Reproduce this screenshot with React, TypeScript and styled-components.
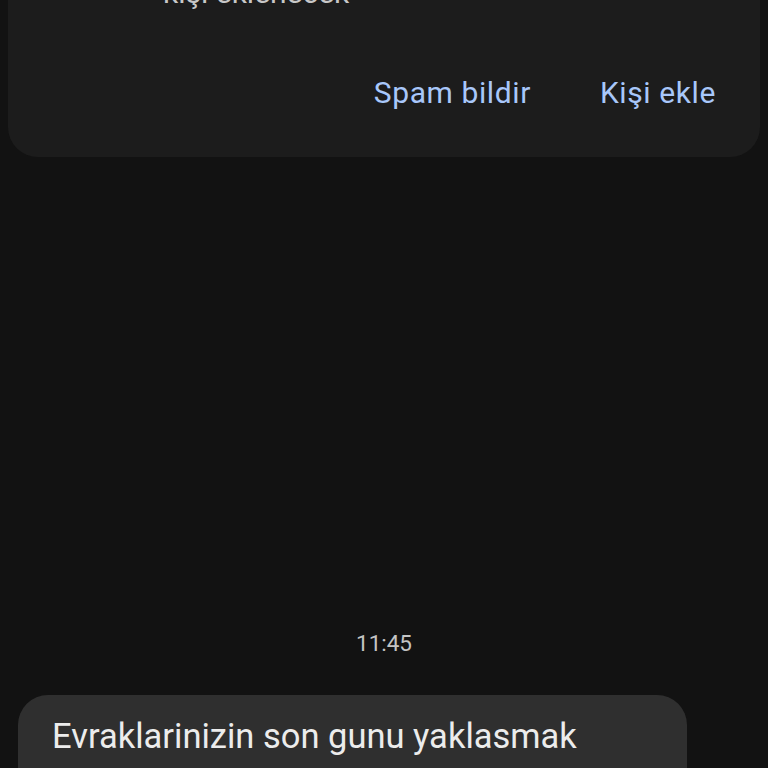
import React from "react";
import styled, { createGlobalStyle } from "styled-components";

const Global = createGlobalStyle`
  html, body {
    margin: 0;
    padding: 0;
    background: #121212;
    height: 768px;
    overflow: hidden;
  }
  body {
    font-family: Roboto, "Noto Sans", "Liberation Sans", sans-serif;
  }
`;

const Screen = styled.div`
  width: 768px;
  height: 768px;
  display: flex;
  flex-direction: column;
  background: #121212;
  overflow: hidden;
`;

const Card = styled.div`
  flex-shrink: 0;
  margin: -60px 8px 0;
  padding: 35px 0 0 155px;
  height: 217px;
  box-sizing: border-box;
  background: #1c1c1c;
  border-radius: 30px;
  display: flex;
  flex-direction: column;
`;

const Subtitle = styled.div`
  font-size: 30px;
  line-height: 36px;
  color: #c8c8c8;
`;

const Actions = styled.div`
  display: flex;
  justify-content: flex-end;
  gap: 69px;
  padding-right: 44px;
  margin-top: 64px;
`;

const ActionButton = styled.span`
  font-size: 30px;
  line-height: 36px;
  color: #a8c7fa;
  letter-spacing: 0.6px;
`;

const Timestamp = styled.div`
  flex-shrink: 0;
  margin-top: 471px;
  text-align: center;
  font-size: 22.5px;
  line-height: 30px;
  color: #c4c4c4;
`;

const Bubble = styled.div`
  flex-shrink: 0;
  margin: 37px 0 0 18px;
  width: 669px;
  box-sizing: border-box;
  padding: 19px 34px 60px;
  background: #2f2f2f;
  border-radius: 30px;
  color: #ececec;
  font-size: 34.5px;
  line-height: 44px;
`;

export default function App() {
  return (
    <>
      <Global />
      <Screen>
        <Card>
          <Subtitle>kişi eklenecek</Subtitle>
          <Actions>
            <ActionButton>Spam bildir</ActionButton>
            <ActionButton>Kişi ekle</ActionButton>
          </Actions>
        </Card>
        <Timestamp>11:45</Timestamp>
        <Bubble>Evraklarinizin son gunu yaklasmak</Bubble>
      </Screen>
    </>
  );
}
